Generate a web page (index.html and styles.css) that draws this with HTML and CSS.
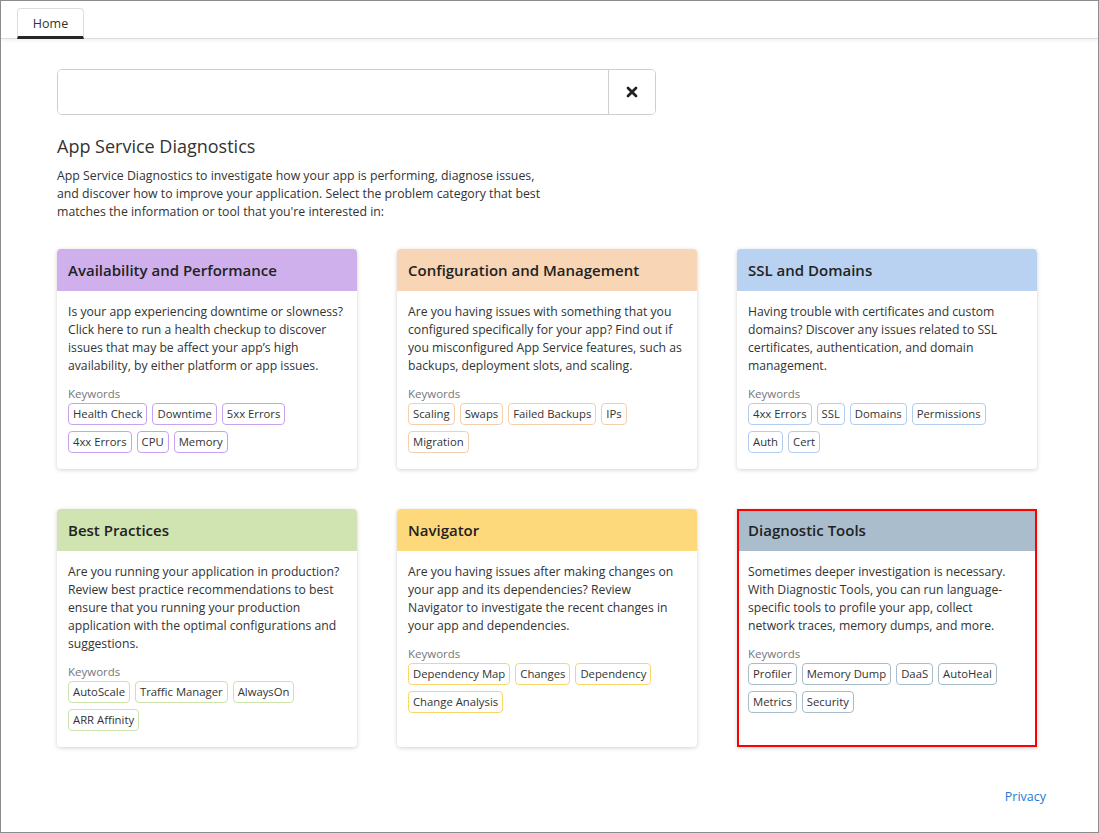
FILE: index.html
```html
<!DOCTYPE html>
<html lang="en">
<head>
<meta charset="utf-8">
<title>App Service Diagnostics</title>
<link rel="stylesheet" href="styles.css">
</head>
<body>
<div class="frame">
  <div class="tabbar">
    <div class="tab">Home</div>
  </div>
  <main class="content">
    <div class="search">
      <input class="search-input" type="text" aria-label="Search">
      <button class="search-clear" aria-label="Clear">
        <svg width="12" height="12" viewBox="0 0 12 12"><path d="M2 2 L10 10 M10 2 L2 10" stroke="#222" stroke-width="2.8" stroke-linecap="round"/></svg>
      </button>
    </div>
    <h1 class="title">App Service Diagnostics</h1>
    <p class="intro">App Service Diagnostics to investigate how your app is performing, diagnose issues, and discover how to improve your application. Select the problem category that best matches the information or tool that you're interested in:</p>

    <div class="grid">
      <div class="card purple">
        <div class="card-head">Availability and Performance</div>
        <div class="card-body">
          <p class="desc">Is your app experiencing downtime or slowness?<br>Click here to run a health checkup to discover<br>issues that may be affect your app’s high<br>availability, by either platform or app issues.</p>
          <div class="kw-label">Keywords</div>
          <div class="tags"><span class="tag">Health Check</span><span class="tag">Downtime</span><span class="tag">5xx Errors</span><span class="tag">4xx Errors</span><span class="tag">CPU</span><span class="tag">Memory</span></div>
        </div>
      </div>
      <div class="card orange">
        <div class="card-head">Configuration and Management</div>
        <div class="card-body">
          <p class="desc">Are you having issues with something that you<br>configured specifically for your app? Find out if<br>you misconfigured App Service features, such as<br>backups, deployment slots, and scaling.</p>
          <div class="kw-label">Keywords</div>
          <div class="tags"><span class="tag">Scaling</span><span class="tag">Swaps</span><span class="tag">Failed Backups</span><span class="tag">IPs</span><span class="tag">Migration</span></div>
        </div>
      </div>
      <div class="card blue">
        <div class="card-head">SSL and Domains</div>
        <div class="card-body">
          <p class="desc">Having trouble with certificates and custom<br>domains? Discover any issues related to SSL<br>certificates, authentication, and domain<br>management.</p>
          <div class="kw-label">Keywords</div>
          <div class="tags"><span class="tag">4xx Errors</span><span class="tag">SSL</span><span class="tag">Domains</span><span class="tag">Permissions</span><span class="tag">Auth</span><span class="tag">Cert</span></div>
        </div>
      </div>
      <div class="card green">
        <div class="card-head">Best Practices</div>
        <div class="card-body">
          <p class="desc">Are you running your application in production?<br>Review best practice recommendations to best<br>ensure that you running your production<br>application with the optimal configurations and<br>suggestions.</p>
          <div class="kw-label">Keywords</div>
          <div class="tags"><span class="tag">AutoScale</span><span class="tag">Traffic Manager</span><span class="tag">AlwaysOn</span><span class="tag">ARR Affinity</span></div>
        </div>
      </div>
      <div class="card yellow">
        <div class="card-head">Navigator</div>
        <div class="card-body">
          <p class="desc">Are you having issues after making changes on<br>your app and its dependencies? Review<br>Navigator to investigate the recent changes in<br>your app and dependencies.</p>
          <div class="kw-label">Keywords</div>
          <div class="tags"><span class="tag">Dependency Map</span><span class="tag">Changes</span><span class="tag">Dependency</span><span class="tag">Change Analysis</span></div>
        </div>
      </div>
      <div class="card slate selected">
        <div class="card-head">Diagnostic Tools</div>
        <div class="card-body">
          <p class="desc">Sometimes deeper investigation is necessary.<br>With Diagnostic Tools, you can run language-<br>specific tools to profile your app, collect<br>network traces, memory dumps, and more.</p>
          <div class="kw-label">Keywords</div>
          <div class="tags"><span class="tag">Profiler</span><span class="tag">Memory Dump</span><span class="tag">DaaS</span><span class="tag">AutoHeal</span><span class="tag">Metrics</span><span class="tag">Security</span></div>
        </div>
      </div>
    </div>

    <div class="footer"><a class="privacy" href="#">Privacy</a></div>
  </main>
</div>
</body>
</html>
```

FILE: styles.css
```css
html, body {
  margin: 0;
  padding: 0;
  background: #fff;
}
body {
  font-family: "Open Sans", "Noto Sans", sans-serif;
  font-size: 13px;
  color: #333;
}
.frame {
  box-sizing: border-box;
  width: 1099px;
  height: 833px;
  border: 1px solid #8c8c8c;
  overflow: hidden;
}
.tabbar {
  height: 37px;
  border-bottom: 1px solid #dcdcdc;
  box-shadow: 0 2px 3px rgba(0,0,0,0.05);
  display: flex;
  align-items: flex-end;
  padding-left: 16px;
}
.tab {
  box-sizing: border-box;
  width: 67px;
  height: 31px;
  border: 1px solid #dedede;
  border-bottom: 3px solid #262626;
  border-radius: 4px 4px 0 0;
  display: flex;
  align-items: center;
  justify-content: center;
  font-size: 12.5px;
  color: #333;
  padding-top: 1px;
  margin-bottom: -1px;
}
.content {
  padding: 30px 0 0 56px;
}
.search {
  display: flex;
  width: 599px;
  height: 46px;
  box-sizing: border-box;
  border: 1px solid #cfcfcf;
  border-radius: 5px;
  overflow: hidden;
}
.search-input {
  flex: 1;
  border: none;
  outline: none;
  font: inherit;
  padding: 0 12px;
}
.search-clear {
  width: 47px;
  border: none;
  border-left: 1px solid #cfcfcf;
  background: #fff;
  display: flex;
  align-items: center;
  justify-content: center;
  padding: 0;
}
.title {
  margin: 19px 0 0 0;
  font-size: 18px;
  font-weight: 400;
  color: #333;
  line-height: 24px;
}
.intro {
  margin: 9px 0 0 0;
  width: 500px;
  line-height: 18px;
  font-size: 12.3px;
}
.grid {
  display: grid;
  grid-template-columns: repeat(3, 300px);
  column-gap: 40px;
  row-gap: 40px;
  margin-top: 28px;
}
.card {
  border-radius: 4px;
  box-shadow: 0 1px 4px rgba(0,0,0,0.18);
  background: #fff;
  overflow: hidden;
  display: flex;
  flex-direction: column;
}
.card-head {
  height: 42px;
  display: flex;
  align-items: center;
  padding-left: 11px;
  font-size: 15px;
  font-weight: 600;
  color: #222;
}
.card-body {
  padding: 12px 6px 16px 11px;
}
.desc {
  margin: 0;
  line-height: 18px;
  font-size: 12.2px;
  color: #333;
}
.kw-label {
  margin-top: 10px;
  font-size: 11.5px;
  line-height: 17px;
  color: #777;
}
.tags {
  display: flex;
  flex-wrap: wrap;
  gap: 6px 5px;
  max-width: 262px;
  margin-top: 1px;
}
.tag {
  box-sizing: border-box;
  height: 22px;
  line-height: 20px;
  padding: 0 4px;
  border: 1px solid #ccc;
  border-radius: 4px;
  font-size: 11.3px;
  color: #333;
}
.purple .card-head { background: #cfb0ec; }
.purple .tag { border-color: #c7a3ee; }
.orange .card-head { background: #f8d5b4; }
.orange .tag { border-color: #f4cfae; }
.blue .card-head { background: #b9d2f2; }
.blue .tag { border-color: #b3cdf0; }
.green .card-head { background: #d0e4b2; }
.green .tag { border-color: #cde3ac; }
.yellow .card-head { background: #fed97b; }
.yellow .tag { border-color: #fbd76b; }
.slate .card-head { background: #a9bdcd; }
.slate .tag { border-color: #a8bccc; }
.selected {
  outline: 2px solid #ff0000;
  outline-offset: -2px;
  border-radius: 0;
}
.footer {
  width: 989px;
  display: flex;
  justify-content: flex-end;
  margin-top: 41px;
}
.privacy {
  color: #2878d6;
  text-decoration: none;
  font-size: 12.5px;
}
```
